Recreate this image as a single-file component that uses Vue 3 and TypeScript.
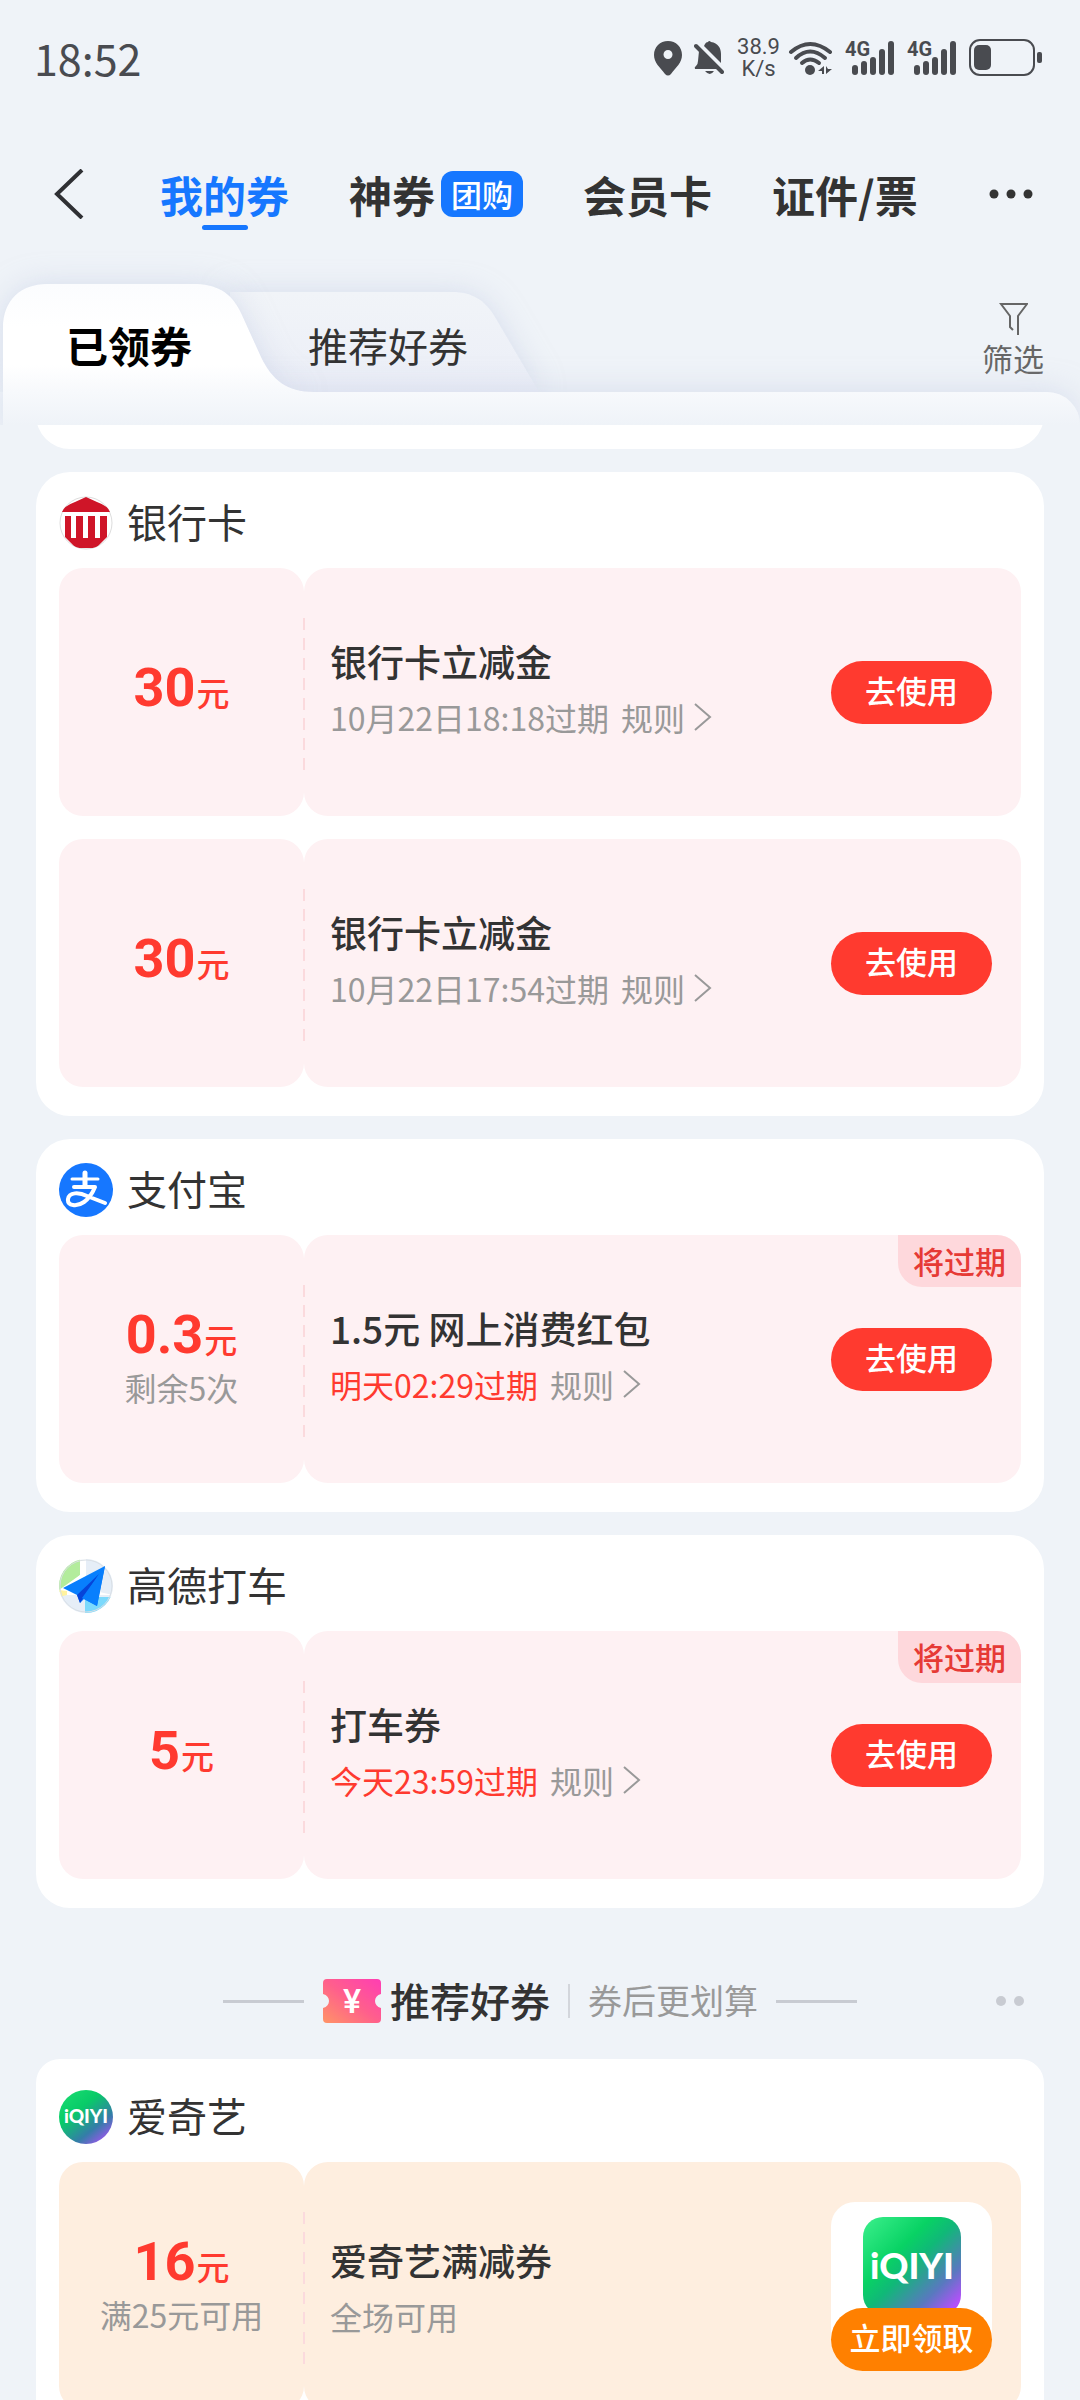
<script setup lang="ts">
import { ref } from 'vue'

interface Coupon {
  amount: string
  limit?: string
  title: string
  note: string
  urgent?: boolean
  rules?: boolean
  claim?: boolean
}

interface Group {
  brand: 'bank' | 'alipay' | 'amap' | 'iqiyi'
  name: string
  coupons: Coupon[]
}

const owned: Group[] = [
  {
    brand: 'bank',
    name: '银行卡',
    coupons: [
      { amount: '30', title: '银行卡立减金', note: '10月22日18:18过期', rules: true },
      { amount: '30', title: '银行卡立减金', note: '10月22日17:54过期', rules: true },
    ],
  },
  {
    brand: 'alipay',
    name: '支付宝',
    coupons: [
      { amount: '0.3', limit: '剩余5次', title: '1.5元 网上消费红包', note: '明天02:29过期', urgent: true, rules: true },
    ],
  },
  {
    brand: 'amap',
    name: '高德打车',
    coupons: [{ amount: '5', title: '打车券', note: '今天23:59过期', urgent: true, rules: true }],
  },
]

const suggested: Group[] = [
  {
    brand: 'iqiyi',
    name: '爱奇艺',
    coupons: [{ amount: '16', limit: '满25元可用', title: '爱奇艺满减券', note: '全场可用', claim: true }],
  },
]

const sections = [
  { key: 'owned', groups: owned },
  { key: 'suggested', groups: suggested },
]

const topTabs = [
  { label: '我的券', tag: '' },
  { label: '神券', tag: '团购' },
  { label: '会员卡', tag: '' },
  { label: '证件/票', tag: '' },
]
const activeTop = ref(0)
</script>

<template>
  <div class="app">
    <div class="status">
      <span class="clock">18:52</span>
      <div class="indicators">
        <svg class="i-pin" width="28" height="36" viewBox="0 0 28 36">
          <path fill-rule="evenodd" d="M14 1C6 1 0 7 0 15c0 8 6 12 11 19q3 3 6 0c5-7 11-11 11-19C28 7 22 1 14 1zm0 9a4.500 4.500 0 1 1 0 9 4.500 4.500 0 0 1 0-9z" />
        </svg>
        <svg class="i-bell" width="30" height="36" viewBox="0 0 30 36">
          <path d="M11 4q1-2 3-2 1-2 3 0c7 1 10 6 10 12v9L10 6z" />
          <path d="M5 11 23 29H1q-1-2 1-3 2-2 2-5z" />
          <path d="M2 6 28 32" fill="none" stroke="#494b50" stroke-width="4" stroke-linecap="round" />
          <path d="M11 31h9q-4 6-9 0z" />
        </svg>
        <div class="speed"><span>38.9</span><span>K/s</span></div>
        <svg class="i-wifi" width="45" height="36" viewBox="0 0 45 36">
          <g fill="none" stroke="#494b50" stroke-width="4" stroke-linecap="round">
            <path d="M3 12Q22-4 42 12" />
            <path d="M8 18Q22 5 37 18" />
            <path d="M14 23Q22 16 31 23" />
          </g>
          <circle cx="22" cy="30" r="5" />
          <path d="M36 26v8h-2v-3h-4zM38 26v8l6-5h-4z" />
        </svg>
        <svg v-for="n in 2" :key="n" class="i-signal" width="50" height="42" viewBox="0 -6 50 42">
          <text x="0" y="16">4G</text>
          <rect x="7" y="25" width="6" height="10" rx="3" />
          <rect x="16" y="21" width="6" height="14" rx="3" />
          <rect x="25" y="17" width="6" height="18" rx="3" />
          <rect x="34" y="9" width="6" height="26" rx="3" />
          <rect x="43" y="1" width="6" height="34" rx="3" />
        </svg>
        <svg class="i-battery" width="73" height="38" viewBox="0 0 73 38">
          <rect x="1" y="1" width="64" height="35" rx="10" fill="none" stroke="#494b50" stroke-width="2" />
          <rect x="5" y="6" width="17" height="25" rx="5" />
          <rect x="68" y="13" width="5" height="11" rx="2" />
        </svg>
      </div>
    </div>

    <header class="nav">
      <button class="plain" aria-label="返回">
        <svg width="30" height="50" viewBox="0 0 30 50">
          <path d="M28 1 3 25 28 49" fill="none" stroke="#2f3034" stroke-width="4" />
        </svg>
      </button>
      <nav class="top-tabs">
        <button
          v-for="(tab, i) in topTabs"
          :key="tab.label"
          class="plain top-tab"
          :class="{ active: i === activeTop }"
          @click="activeTop = i"
        >
          {{ tab.label }}<span v-if="tab.tag" class="tag">{{ tab.tag }}</span>
        </button>
      </nav>
      <button class="plain more" aria-label="更多">
        <svg width="46" height="12" viewBox="0 0 46 12">
          <circle cx="6" cy="6" r="4.500" /><circle cx="23" cy="6" r="4.500" /><circle cx="40" cy="6" r="4.500" />
        </svg>
      </button>
    </header>

    <div class="strip">
      <button class="plain sub-tab first">
        <svg class="shape" width="311" height="108" viewBox="0 0 311 108">
          <defs>
            <linearGradient id="front" x1="0" y1="0" x2="0" y2="1">
              <stop offset="0" stop-color="#fbfcfe" />
              <stop offset="0.400" stop-color="#fff" />
              <stop offset="0.750" stop-color="#fff" />
              <stop offset="1" stop-color="#f7f9fc" />
            </linearGradient>
          </defs>
          <path fill="url(#front)" d="M0 108V44C0 16 18 0 44 0H190C212 0 228 7 238 29L258 73C269 96 284 108 311 108Z" />
        </svg>
        <span>已领券</span>
      </button>
      <button class="plain sub-tab second">
        <svg class="shape" width="309" height="100" viewBox="0 0 309 100">
          <defs>
            <linearGradient id="rear" x1="0" y1="0" x2="0" y2="1">
              <stop offset="0" stop-color="#f1f4f8" />
              <stop offset="1" stop-color="#ebeef7" />
            </linearGradient>
          </defs>
          <path fill="url(#rear)" d="M0 0H222C242 0 255 8 265 25L309 100H0Z" />
        </svg>
        <span>推荐好券</span>
      </button>
      <button class="plain filter">
        <svg width="30" height="34" viewBox="0 0 30 34">
          <path d="M15 28 12 25V14L3 2H29L20 14V33" fill="none" stroke="#666" stroke-width="2" />
        </svg>
        <span>筛选</span>
      </button>
    </div>
    <div class="panel-top"></div>

    <main class="list">
      <div class="card passed"></div>
      <template v-for="section in sections" :key="section.key">
        <div v-if="section.key === 'suggested'" class="divider">
          <i class="rule"></i>
          <svg class="ticket" width="58" height="44" viewBox="0 0 58 44">
            <defs>
              <linearGradient id="tk" x1="0" y1="1" x2="1" y2="0">
                <stop offset="0" stop-color="#ff9466" />
                <stop offset="0.500" stop-color="#ff5f8c" />
                <stop offset="1" stop-color="#ff3db4" />
              </linearGradient>
            </defs>
            <path fill="url(#tk)" d="M4 0H54Q58 0 58 4V15C50 17 50 27 58 29V40Q58 44 54 44H4Q0 44 0 40V29C8 27 8 17 0 15V4Q0 0 4 0Z" />
            <text x="29" y="34" text-anchor="middle">¥</text>
          </svg>
          <h2>推荐好券</h2>
          <i class="bar"></i>
          <span class="slogan">券后更划算</span>
          <i class="rule"></i>
          <div class="dots"><i></i><i></i></div>
        </div>

        <section v-for="group in section.groups" :key="group.name" class="card" :class="section.key">
          <div class="brand">
            <svg class="logo" width="54" height="54" viewBox="0 0 54 54">
              <template v-if="group.brand === 'bank'">
                <defs><clipPath id="disc"><circle cx="27" cy="27" r="26" /></clipPath></defs>
                <circle cx="27" cy="27" r="26" fill="#fff" stroke="#ddd" />
                <path d="M27 1 38 6Q49 10 51 16H3Q5 10 16 6Z" fill="#cf1528" />
                <path d="M6 20H48V41L37 52H17L6 41Z" fill="#cf1528" clip-path="url(#disc)" />
                <path d="M12 19h5v23h-5zM24 19h5v23h-5zM36 19h5v23h-5z" fill="#fff" />
              </template>
              <template v-else-if="group.brand === 'alipay'">
                <circle cx="27" cy="27" r="27" fill="#1677ff" />
                <g fill="none" stroke="#fff" stroke-linecap="round" stroke-linejoin="round">
                  <path d="M26 10V22" stroke-width="5" />
                  <path d="M13 16H39" stroke-width="3" />
                  <path d="M15 24H36Q32 34 25 39C18 44 8 43 9 36 10 29 20 29 28 33L46 40" stroke-width="4" />
                </g>
              </template>
              <template v-else-if="group.brand === 'amap'">
                <defs><clipPath id="map"><circle cx="27" cy="27" r="27" /></clipPath></defs>
                <g clip-path="url(#map)">
                  <rect width="54" height="54" fill="#e6eef7" />
                  <path d="M0 0H21V16L0 34Z" fill="#b3ec9c" />
                  <path d="M21 0H27V30L54 36H0V31L21 16Z" fill="#fff" />
                  <path d="M26 38H54V54H26Z" fill="#7bd9fc" />
                  <path d="M0 31 8 32V36L0 38Z" fill="#fff3a0" />
                </g>
                <circle cx="27" cy="27" r="26" fill="none" stroke="#d9dfe5" />
                <path d="M46 7 4 29 18 36 21 44 25 40 38 47Z" fill="#087ffd" />
                <path d="M40 15 18 36 21 44Z" fill="#0644d9" />
                <path d="M46 7 23 39 38 47Z" fill="#087ffd" />
              </template>
              <template v-else>
                <defs>
                  <linearGradient id="qy" x1="0.100" y1="0" x2="0.900" y2="1">
                    <stop offset="0" stop-color="#19dc70" />
                    <stop offset="0.350" stop-color="#08cb68" />
                    <stop offset="0.700" stop-color="#347da8" />
                    <stop offset="1" stop-color="#b74cff" />
                  </linearGradient>
                </defs>
                <circle cx="27" cy="27" r="27" fill="url(#qy)" />
                <text class="small-mark" x="27" y="33" text-anchor="middle">iQIYI</text>
              </template>
            </svg>
            <h3>{{ group.name }}</h3>
          </div>

          <article
            v-for="coupon in group.coupons"
            :key="coupon.note"
            class="coupon"
            :class="{ claim: coupon.claim }"
          >
            <div class="value">
              <p class="amount"><b>{{ coupon.amount }}</b><span>元</span></p>
              <p v-if="coupon.limit" class="limit">{{ coupon.limit }}</p>
            </div>
            <div class="body">
              <div class="info">
                <h4>{{ coupon.title }}</h4>
                <p class="note">
                  <span :class="{ urgent: coupon.urgent }">{{ coupon.note }}</span>
                  <a v-if="coupon.rules" href="#">规则<svg width="18" height="28" viewBox="0 0 18 28">
                    <path d="M1 1 16 14 1 27" fill="none" stroke="#999" stroke-width="2" />
                  </svg></a>
                </p>
              </div>
              <div v-if="coupon.claim" class="offer">
                <svg width="98" height="98" viewBox="0 0 98 98">
                  <defs>
                    <linearGradient id="qyl" x1="0" y1="0" x2="1" y2="1">
                      <stop offset="0" stop-color="#3cf08c" />
                      <stop offset="0.350" stop-color="#08d264" />
                      <stop offset="0.500" stop-color="#10b878" />
                      <stop offset="0.750" stop-color="#5a78c0" />
                      <stop offset="0.920" stop-color="#b450fa" />
                    </linearGradient>
                  </defs>
                  <rect width="98" height="98" rx="20" fill="url(#qyl)" />
                  <text class="large-mark" x="49" y="62" text-anchor="middle">iQIYI</text>
                </svg>
                <button class="action">立即领取</button>
              </div>
              <button v-else class="action">去使用</button>
              <span v-if="coupon.urgent" class="badge">将过期</span>
            </div>
          </article>
        </section>
      </template>
    </main>
  </div>
</template>

<style>
body {
  background: #eff3f8;
}
</style>

<style scoped>
.app {
  display: flex;
  flex-direction: column;
  height: 100vh;
  overflow: hidden;
  background: #eff3f8;
  color: #333;
  font-family: "Noto Sans CJK SC", sans-serif;
}
h2, h3, h4, p {
  margin: 0;
  font-weight: 400;
}
svg {
  display: block;
  flex: none;
}
.plain {
  border: 0;
  padding: 0;
  background: none;
  color: inherit;
  font: inherit;
}

.status {
  display: flex;
  flex: none;
  align-items: center;
  justify-content: space-between;
  height: 116px;
  padding: 0 38px 0 34px;
  color: #494b50;
}
.clock {
  padding-bottom: 2px;
  font-size: 43px;
  line-height: 48px;
}
.indicators {
  display: flex;
  align-items: center;
  gap: 12px;
  fill: #494b50;
}
.i-bell {
  margin-right: 1px;
}
.speed {
  display: flex;
  flex-direction: column;
  align-items: center;
  margin-right: -4px;
  font: 22px/22px Roboto, sans-serif;
}
.i-signal {
  margin-top: -6px;
}
.i-signal text {
  font: 700 20px Roboto, sans-serif;
}

.nav {
  display: flex;
  flex: none;
  align-items: center;
  height: 156px;
  padding: 0 46px 0 54px;
}
.top-tabs {
  display: flex;
  gap: 60px;
  margin-left: 76px;
}
.top-tab {
  position: relative;
  display: flex;
  align-items: center;
  height: 72px;
  font-size: 43px;
  font-weight: 700;
  line-height: 48px;
}
.top-tab.active {
  color: #1677ff;
}
.top-tab.active::after {
  content: "";
  position: absolute;
  bottom: 0;
  left: calc(50% - 23px);
  width: 46px;
  height: 5px;
  border-radius: 3px;
  background: #1677ff;
}
.tag {
  margin-left: 6px;
  padding: 0 10px;
  border-radius: 12px;
  background: #1677ff;
  color: #fff;
  font-size: 31px;
  font-weight: 500;
  line-height: 46px;
}
.more {
  margin-left: auto;
  fill: #333;
}

.strip {
  display: flex;
  flex: none;
  align-items: flex-end;
  height: 120px;
  padding: 0 36px 0 3px;
}
.sub-tab {
  position: relative;
  text-align: left;
  white-space: nowrap;
}
.sub-tab span {
  position: relative;
}
.shape {
  position: absolute;
  inset: 0;
  overflow: visible;
  filter: drop-shadow(0 0 14px rgba(190, 200, 226, 0.5));
  clip-path: inset(-50px -50px 0 -50px);
}
.first {
  z-index: 2;
  width: 311px;
  height: 108px;
  padding: 12px 0 0 63px;
  color: #000;
  font-size: 42px;
  font-weight: 700;
}
.second {
  width: 309px;
  height: 100px;
  margin-left: -84px;
  padding: 6px 0 0 78px;
  font-size: 40px;
}
.filter {
  display: flex;
  flex-direction: column;
  align-items: center;
  gap: 2px;
  margin: 0 0 14px auto;
  color: #666;
  font-size: 31px;
  line-height: 40px;
}
.panel-top {
  position: relative;
  z-index: 1;
  flex: none;
  height: 33px;
  margin-left: 3px;
  border-radius: 0 40px 0 0;
  background: linear-gradient(#f7f9fc, #eff3f8);
  box-shadow: 0 0 30px rgba(190, 200, 226, 0.5);
}

.list {
  position: relative;
  z-index: 3;
  flex: 1;
  min-height: 0;
  padding: 0 36px;
  overflow: auto;
  scrollbar-width: none;
  background: #eff3f8;
}
.card {
  margin-bottom: 23px;
  padding: 24px 23px 29px;
  border-radius: 34px;
  background: #fff;
}
.passed {
  height: 48px;
  margin-top: -77px;
}
.card.suggested {
  padding-top: 31px;
  border-radius: 24px;
}
.brand {
  display: flex;
  align-items: center;
  gap: 14px;
  height: 54px;
  margin-bottom: 18px;
}
.brand h3 {
  padding-bottom: 4px;
  font-size: 40px;
  line-height: 48px;
}
.coupon {
  display: flex;
  height: 248px;
}
.coupon + .coupon {
  margin-top: 23px;
}
.value,
.body {
  border-radius: 24px;
  background: #fef1f3;
}
.value {
  display: flex;
  box-sizing: border-box;
  flex: none;
  flex-direction: column;
  align-items: center;
  justify-content: center;
  width: 245px;
  padding-bottom: 8px;
}
.amount {
  display: flex;
  align-items: baseline;
  gap: 1px;
  height: 64px;
  color: #ff3a2f;
  font-size: 33px;
  font-weight: 500;
  line-height: 64px;
}
.amount b {
  font: 700 54px/64px Roboto, sans-serif;
}
.limit {
  color: #999;
  font-size: 32px;
  line-height: 40px;
}
.body {
  position: relative;
  display: flex;
  flex: 1;
  align-items: center;
  justify-content: space-between;
  padding: 0 29px 0 26px;
}
.body::before {
  content: "";
  position: absolute;
  top: 50px;
  left: -1px;
  width: 2px;
  height: 154px;
  background: repeating-linear-gradient(#fbdadd 0 12px, transparent 12px 20px);
}
.info {
  display: flex;
  flex-direction: column;
  gap: 8px;
  padding-bottom: 6px;
}
.info h4 {
  font-size: 37px;
  font-weight: 500;
  line-height: 48px;
}
.note {
  display: flex;
  gap: 12px;
  color: #999;
  font-size: 32px;
  line-height: 48px;
}
.note a {
  display: flex;
  align-items: center;
  gap: 9px;
  color: inherit;
  text-decoration: none;
}
.urgent {
  color: #ff3a2f;
}
.action {
  width: 161px;
  height: 63px;
  padding: 0 0 4px;
  border: 0;
  border-radius: 32px;
  background: #ff3a2f;
  color: #fff;
  font: 500 31px/40px "Noto Sans CJK SC", sans-serif;
}
.badge {
  position: absolute;
  top: 0;
  right: 0;
  padding: 0 15px;
  border-radius: 0 24px;
  background: #fed8dc;
  color: #e63a35;
  font-size: 31px;
  font-weight: 500;
  line-height: 52px;
}
.claim .value,
.claim .body {
  background: #feeedf;
}
.claim .info {
  padding: 4px 0 0;
}
.offer {
  display: flex;
  flex-direction: column;
  align-items: center;
  width: 161px;
  height: 154px;
  padding-top: 15px;
  border-radius: 24px 24px 32px 32px;
  background: #fff;
}
.claim .action {
  position: relative;
  margin-top: -7px;
  background: #ff8000;
}
.small-mark,
.large-mark {
  fill: #fff;
  font-family: Lato, sans-serif;
  font-weight: 900;
}
.small-mark {
  font-size: 19px;
}
.large-mark {
  font-size: 36px;
}

.divider {
  position: relative;
  display: flex;
  align-items: center;
  justify-content: center;
  height: 94px;
  margin: -23px 0 11px;
  padding-top: 46px;
}
.divider .rule {
  width: 81px;
  height: 3px;
  background: #c8cbd2;
}
.ticket {
  margin: 0 9px 0 19px;
}
.ticket text {
  fill: #fff;
  font: 500 34px Roboto, sans-serif;
}
.divider h2 {
  padding-bottom: 2px;
  font-size: 40px;
  font-weight: 500;
  line-height: 48px;
}
.bar {
  width: 2px;
  height: 34px;
  margin: 0 18px;
  background: #d3d6dc;
}
.slogan {
  margin-right: 18px;
  padding-bottom: 2px;
  color: #999;
  font-size: 34px;
  line-height: 48px;
}
.dots {
  position: absolute;
  right: 20px;
  display: flex;
  gap: 8px;
}
.dots i {
  width: 10px;
  height: 10px;
  border-radius: 50%;
  background: #c8cbd2;
}
</style>
